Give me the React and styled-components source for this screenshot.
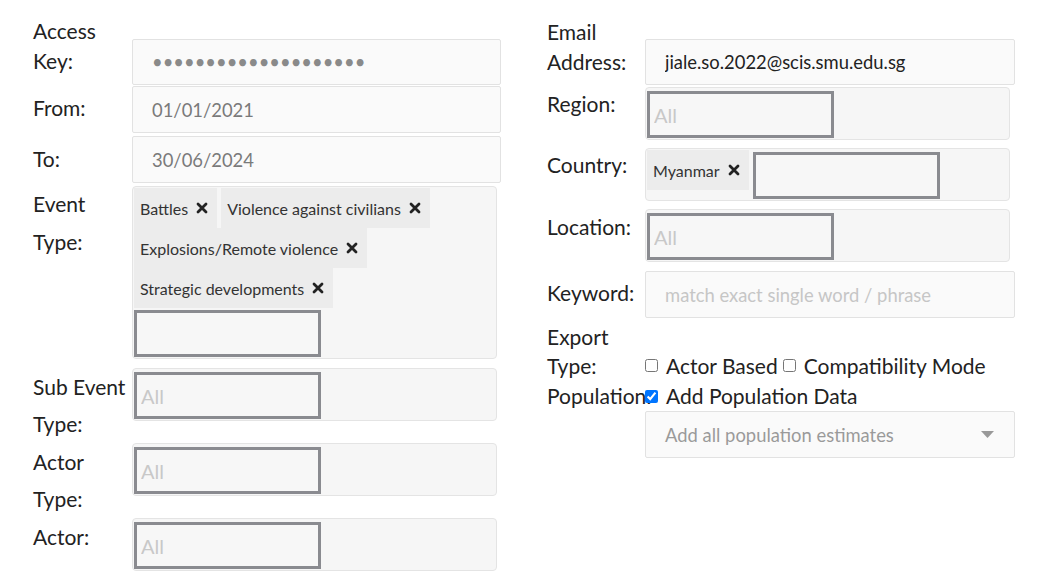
import React from 'react';
import styled, { createGlobalStyle } from 'styled-components';

const GlobalStyle = createGlobalStyle`
  body {
    margin: 0;
    background: #fff;
    font-family: Lato, "Open Sans", sans-serif;
    color: #222;
  }
`;

const Page = styled.div`
  display: flex;
  gap: 46px;
  padding-left: 33px;
  width: 1056px;
  height: 578px;
  box-sizing: border-box;
  overflow: hidden;
`;

const Column = styled.div`
  display: flex;
  flex-direction: column;
  width: 468px;
  padding-top: ${(p) => p.$top}px;
`;

const Row = styled.div`
  display: grid;
  grid-template-columns: ${(p) => p.$labelWidth || 99}px 1fr;
  align-items: start;
  height: ${(p) => (p.$h ? `${p.$h}px` : 'auto')};
`;

const Label = styled.div`
  font-size: 21px;
  line-height: ${(p) => p.$lh || 30}px;
  padding-top: ${(p) => p.$pt || 0}px;
  white-space: ${(p) => (p.$nowrap ? 'nowrap' : 'normal')};
`;

const Field = styled.div`
  margin-top: ${(p) => p.$mt || 0}px;
  position: relative;
`;

const TextInput = styled.input`
  display: block;
  width: 100%;
  height: ${(p) => p.$h || 47}px;
  box-sizing: border-box;
  padding: 0 19px;
  border: 1px solid #e2e2e2;
  border-radius: 2px;
  background: #fafafa;
  font-family: Lato, sans-serif;
  font-size: 18.4px;
  color: ${(p) => p.$color || '#222'};
  outline: none;

  &::placeholder {
    color: #c6c6c6;
  }
`;

const MultiBox = styled.div`
  display: flex;
  flex-wrap: wrap;
  align-items: flex-start;
  width: 365px;
  box-sizing: border-box;
  padding: 1px;
  border: 1px solid #e4e4e4;
  border-radius: 4px;
  background: #f6f6f6;
`;

const Tag = styled.span`
  display: inline-flex;
  align-items: center;
  gap: 8px;
  height: 40px;
  padding: 0 9px 0 6px;
  margin-right: 4px;
  background: #ececec;
  font-size: 16px;
  color: #333;
  white-space: nowrap;
`;

const SearchInput = styled.input`
  width: 187px;
  height: 47px;
  box-sizing: border-box;
  margin: 2px 0 0 0;
  padding: 0 4px;
  border: 3px solid #8a8b90;
  background: #f7f7f7;
  font-family: Lato, sans-serif;
  font-size: 20px;
  color: #222;
  outline: none;

  &::placeholder {
    color: #c8c8c8;
  }
`;

const CheckLine = styled.div`
  font-size: 21px;
  line-height: ${(p) => p.$lh || 30}px;
  white-space: nowrap;
  display: flex;
  align-items: center;
`;

const Check = styled.input`
  width: 13px;
  height: 13px;
  margin: 0 3px 0 0;
`;

const Gap = styled.span`
  display: inline-block;
  width: 5px;
`;

const SelectBox = styled.div`
  display: flex;
  align-items: center;
  justify-content: space-between;
  height: 47px;
  box-sizing: border-box;
  padding: 0 20px 0 19px;
  border: 1px solid #e2e2e2;
  border-radius: 2px;
  background: #fafafa;
  font-size: 18.4px;
  color: #9a9a9a;
`;

function RemoveIcon() {
  return (
    <svg width="12" height="12" viewBox="0 0 12 12" aria-hidden="true">
      <path
        d="M2 2 L10 10 M10 2 L2 10"
        stroke="#222"
        strokeWidth="2.8"
        strokeLinecap="round"
        fill="none"
      />
    </svg>
  );
}

function Caret() {
  return (
    <svg width="13" height="7" viewBox="0 0 13 7" aria-hidden="true">
      <path d="M0 0 H13 L6.5 7 Z" fill="#999" />
    </svg>
  );
}

function MultiSelect({ tags = [], placeholder }) {
  return (
    <MultiBox>
      {tags.map((t) => (
        <Tag key={t}>
          {t}
          <RemoveIcon />
        </Tag>
      ))}
      <SearchInput placeholder={placeholder} readOnly />
    </MultiBox>
  );
}

const eventTypes = [
  'Battles',
  'Violence against civilians',
  'Explosions/Remote violence',
  'Strategic developments'
];

export default function App() {
  return (
    <>
      <GlobalStyle />
      <Page>
        <Column $top={16}>
          <Row $h={70}>
            <Label>Access Key:</Label>
            <Field $mt={23}>
              <TextInput
                type="password"
                $h={46}
                $color="#8a8a8a"
                value="xxxxxxxxxxxxxxxxxxxx"
                readOnly
              />
            </Field>
          </Row>
          <Row $h={50}>
            <Label $pt={7}>From:</Label>
            <Field>
              <TextInput $color="#7a7a7a" value="01/01/2021" readOnly />
            </Field>
          </Row>
          <Row $h={49}>
            <Label $pt={8}>To:</Label>
            <Field>
              <TextInput $color="#7a7a7a" value="30/06/2024" readOnly />
            </Field>
          </Row>
          <Row $h={183}>
            <Label $lh={38}>Event Type:</Label>
            <Field $mt={1}>
              <MultiSelect tags={eventTypes} />
            </Field>
          </Row>
          <Row $h={75}>
            <Label $lh={37}>Sub Event Type:</Label>
            <Field>
              <MultiSelect placeholder="All" />
            </Field>
          </Row>
          <Row $h={75}>
            <Label $lh={37}>Actor Type:</Label>
            <Field>
              <MultiSelect placeholder="All" />
            </Field>
          </Row>
          <Row>
            <Label $lh={37}>Actor:</Label>
            <Field>
              <MultiSelect placeholder="All" />
            </Field>
          </Row>
        </Column>

        <Column $top={17}>
          <Row $h={70} $labelWidth={98}>
            <Label>Email Address:</Label>
            <Field $mt={22}>
              <TextInput $h={46} value="jiale.so.2022@scis.smu.edu.sg" readOnly />
            </Field>
          </Row>
          <Row $h={61} $labelWidth={98}>
            <Label $pt={2}>Region:</Label>
            <Field>
              <MultiSelect placeholder="All" />
            </Field>
          </Row>
          <Row $h={61} $labelWidth={98}>
            <Label $pt={2}>Country:</Label>
            <Field>
              <MultiSelect tags={['Myanmar']} />
            </Field>
          </Row>
          <Row $h={62} $labelWidth={98}>
            <Label $pt={3}>Location:</Label>
            <Field>
              <MultiSelect placeholder="All" />
            </Field>
          </Row>
          <Row $h={51} $labelWidth={98}>
            <Label $pt={7}>Keyword:</Label>
            <Field>
              <TextInput placeholder="match exact single word / phrase" readOnly />
            </Field>
          </Row>
          <Row $h={59} $labelWidth={98}>
            <Label $lh={29}>Export Type:</Label>
            <Field $mt={29}>
              <CheckLine $lh={29}>
                <Check type="checkbox" readOnly />
                <Gap />
                Actor Based
                <Gap />
                <Check type="checkbox" readOnly />
                <Gap />
                Compatibility Mode
              </CheckLine>
            </Field>
          </Row>
          <Row $labelWidth={98}>
            <Label $nowrap>Population:</Label>
            <Field>
              <CheckLine>
                <Check type="checkbox" checked readOnly />
                <Gap />
                Add Population Data
              </CheckLine>
              <SelectBox>
                Add all population estimates
                <Caret />
              </SelectBox>
            </Field>
          </Row>
        </Column>
      </Page>
    </>
  );
}
